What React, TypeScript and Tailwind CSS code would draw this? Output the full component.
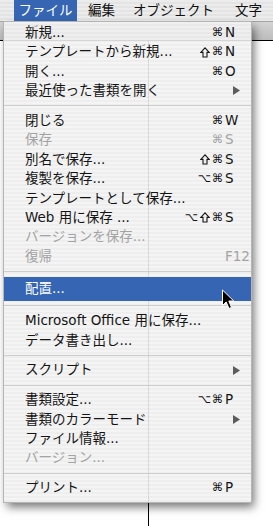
import React from 'react';

type Entry =
  | { sep: true }
  | {
      sep?: false;
      label: string;
      mods?: string[];
      keyName?: string;
      disabled?: boolean;
      sub?: boolean;
      active?: boolean;
    };

const menu: Entry[] = [
  { label: '新規...', mods: ['cmd'], keyName: 'N' },
  { label: 'テンプレートから新規...', mods: ['shift', 'cmd'], keyName: 'N' },
  { label: '開く...', mods: ['cmd'], keyName: 'O' },
  { label: '最近使った書類を開く', sub: true },
  { sep: true },
  { label: '閉じる', mods: ['cmd'], keyName: 'W' },
  { label: '保存', mods: ['cmd'], keyName: 'S', disabled: true },
  { label: '別名で保存...', mods: ['shift', 'cmd'], keyName: 'S' },
  { label: '複製を保存...', mods: ['opt', 'cmd'], keyName: 'S' },
  { label: 'テンプレートとして保存...' },
  { label: 'Web 用に保存 ...', mods: ['opt', 'shift', 'cmd'], keyName: 'S' },
  { label: 'バージョンを保存...', disabled: true },
  { label: '復帰', keyName: 'F12', disabled: true },
  { sep: true },
  { label: '配置...', active: true },
  { sep: true },
  { label: 'Microsoft Office 用に保存...' },
  { label: 'データ書き出し...' },
  { sep: true },
  { label: 'スクリプト', sub: true },
  { sep: true },
  { label: '書類設定...', mods: ['opt', 'cmd'], keyName: 'P' },
  { label: '書類のカラーモード', sub: true },
  { label: 'ファイル情報...' },
  { label: 'バージョン...', disabled: true },
  { sep: true },
  { label: 'プリント...', mods: ['cmd'], keyName: 'P' },
];

function SubArrow({ color }: { color: string }) {
  return (
    <svg width="7" height="9" viewBox="0 0 7 9" className="mr-[11px]">
      <path d="M0 0 L7 4.5 L0 9 Z" fill={color} />
    </svg>
  );
}

// modifier key glyphs
function Mod({ kind }: { kind: string }) {
  if (kind === 'shift') {
    return (
      <span className="flex w-[13px] justify-center">
        <svg width="10" height="11" viewBox="0 0 10 11">
          <path d="M5 0.8 L0.8 5.4 L3 5.4 L3 10 L7 10 L7 5.4 L9.2 5.4 Z" fill="none" stroke="currentColor" strokeWidth="1.1" strokeLinejoin="miter" />
        </svg>
      </span>
    );
  }
  return <span className="w-[13px] text-center text-[11.5px]">{kind === 'opt' ? '⌥' : '⌘'}</span>;
}

function MenuRow({ item }: { item: Exclude<Entry, { sep: true }> }) {
  const text = item.active ? 'text-white' : item.disabled ? 'text-[#a3a3a3]' : 'text-[#141414]';
  return (
    <div
      className={`flex items-center pl-[21px] ${item.active ? 'h-[24px] bg-[#3565b3]' : 'h-[19.4px]'} ${text}`}
    >
      <span className="flex-1 whitespace-nowrap">{item.label}</span>
      {item.sub && <SubArrow color="#5c5c5c" />}
      {item.keyName && (
        <span className="flex items-center">
          {item.mods?.map((m, i) => <Mod key={i} kind={m} />)}
          <span className="ml-[1px] w-[26px] text-left">{item.keyName}</span>
        </span>
      )}
    </div>
  );
}

export default function App() {
  return (
    <div className="relative h-[526px] w-[273px] overflow-hidden bg-white font-[family-name:'DejaVu_Sans','Noto_Sans_CJK_JP',sans-serif] text-[13.5px] leading-none">
      {/* menu bar */}
      <div className="flex h-[22px] items-stretch border-b border-[#a3a3a3] bg-[repeating-linear-gradient(to_bottom,#ececec_0px,#ececec_2px,#e4e4e4_2px,#e4e4e4_4px)] text-[#111]">
        <div className="ml-[14px] flex w-[63px] items-center justify-center bg-[#3565b3] text-white">ファイル</div>
        <div className="ml-[11px] flex items-center">編集</div>
        <div className="ml-[18px] flex items-center">オブジェクト</div>
        <div className="ml-[21px] flex items-center">文字</div>
      </div>

      {/* document window behind */}
      <div className="h-[19px] border-b border-black bg-[linear-gradient(to_bottom,#d4d4d4,#bcbcbc)]" />
      <div className="ml-[148px] h-[486px] w-px bg-black" />

      {/* the open menu */}
      <div className="absolute left-[4px] top-[22px] w-[247px] bg-[repeating-linear-gradient(to_bottom,rgba(243,243,243,0.9)_0px,rgba(243,243,243,0.9)_2px,rgba(236,236,236,0.9)_2px,rgba(236,236,236,0.9)_4px)] pb-[4px] pt-[1px] shadow-[3px_5px_9px_rgba(0,0,0,0.55)] ring-1 ring-[#b5b5b5]">
        {menu.map((item, i) =>
          item.sep ? (
            <div key={i} className="flex h-[10.5px] items-center">
              <div className="h-px w-full bg-[#cdcdcd]" />
            </div>
          ) : (
            <MenuRow key={i} item={item} />
          )
        )}
      </div>

      {/* mouse pointer */}
      <svg width="14" height="21" viewBox="0 0 14 21" className="absolute left-[221px] top-[289px]">
        <path
          d="M1.5 1 L1.5 16.5 L5.2 13 L8 19.5 L10.5 18.4 L7.8 12 L12.8 12 Z"
          fill="#000"
          stroke="#fff"
          strokeWidth="1"
          strokeLinejoin="round"
        />
      </svg>
    </div>
  );
}
